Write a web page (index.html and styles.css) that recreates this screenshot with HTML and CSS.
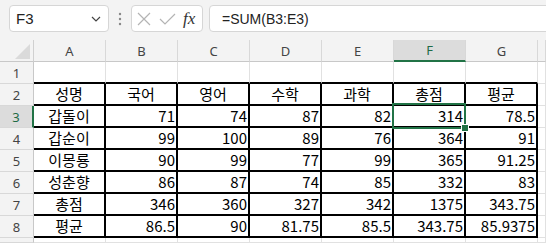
FILE: index.html
```html
<!DOCTYPE html>
<html lang="ko">
  <head>
    <meta charset="UTF-8" />
    <meta name="viewport" content="width=device-width, initial-scale=1.0" />
    <title>성적표</title>
    <link rel="stylesheet" href="styles.css">
  </head>
  <body>
    <!-- 수식 입력줄 -->
    <div class="formula-bar">
      <div class="name-box">
        <span>F3</span>
        <svg class="chevron" width="10" height="6" viewBox="0 0 10 6"><path d="M1 1 L5 5 L9 1" fill="none" stroke="#444" stroke-width="1.2"/></svg>
      </div>
      <div class="grip">
        <svg width="4" height="14" viewBox="0 0 4 14"><circle cx="2" cy="2" r="1.2" fill="#888"/><circle cx="2" cy="7" r="1.2" fill="#888"/><circle cx="2" cy="12" r="1.2" fill="#888"/></svg>
      </div>
      <div class="fx-box">
        <svg width="14" height="14" viewBox="0 0 14 14"><path d="M1 1 L13 13 M13 1 L1 13" stroke="#b4b4b4" stroke-width="1.2" fill="none"/></svg>
        <svg width="17" height="12" viewBox="0 0 17 12"><path d="M1 6 L6 11 L16 1" stroke="#b4b4b4" stroke-width="1.2" fill="none"/></svg>
        <span class="fx">fx</span>
      </div>
      <div class="formula-input">=SUM(B3:E3)</div>
    </div>

    <!-- 시트 -->
    <div class="sheet">
      <div class="corner"><span class="tri"></span></div>
      <div class="col-head">A</div>
      <div class="col-head">B</div>
      <div class="col-head">C</div>
      <div class="col-head">D</div>
      <div class="col-head">E</div>
      <div class="col-head sel">F</div>
      <div class="col-head">G</div>
      <div class="col-head"></div>

      <div class="row-head">1</div>
      <div class="cell top"></div><div class="cell top"></div><div class="cell top"></div><div class="cell top"></div><div class="cell top"></div><div class="cell top"></div><div class="cell top"></div><div class="cell"></div>

      <div class="row-head">2</div>
      <div class="cell box k">성명</div><div class="cell box k">국어</div><div class="cell box k">영어</div><div class="cell box k">수학</div><div class="cell box k">과학</div><div class="cell box k">총점</div><div class="cell box k">평균</div><div class="cell"></div>

      <div class="row-head sel">3</div>
      <div class="cell box k">갑돌이</div><div class="cell box n">71</div><div class="cell box n">74</div><div class="cell box n">87</div><div class="cell box n">82</div><div class="cell box n active">314<span class="cursor"><span class="handle"></span></span></div><div class="cell box n">78.5</div><div class="cell"></div>

      <div class="row-head">4</div>
      <div class="cell box k">갑순이</div><div class="cell box n">99</div><div class="cell box n">100</div><div class="cell box n">89</div><div class="cell box n">76</div><div class="cell box n">364</div><div class="cell box n">91</div><div class="cell"></div>

      <div class="row-head">5</div>
      <div class="cell box k">이몽룡</div><div class="cell box n">90</div><div class="cell box n">99</div><div class="cell box n">77</div><div class="cell box n">99</div><div class="cell box n">365</div><div class="cell box n">91.25</div><div class="cell"></div>

      <div class="row-head">6</div>
      <div class="cell box k">성춘향</div><div class="cell box n">86</div><div class="cell box n">87</div><div class="cell box n">74</div><div class="cell box n">85</div><div class="cell box n">332</div><div class="cell box n">83</div><div class="cell"></div>

      <div class="row-head">7</div>
      <div class="cell box k">총점</div><div class="cell box n">346</div><div class="cell box n">360</div><div class="cell box n">327</div><div class="cell box n">342</div><div class="cell box n">1375</div><div class="cell box n">343.75</div><div class="cell"></div>

      <div class="row-head">8</div>
      <div class="cell box k">평균</div><div class="cell box n">86.5</div><div class="cell box n">90</div><div class="cell box n">81.75</div><div class="cell box n">85.5</div><div class="cell box n">343.75</div><div class="cell box n">85.9375</div><div class="cell"></div>

      <div class="row-head"></div>
      <div class="cell"></div><div class="cell"></div><div class="cell"></div><div class="cell"></div><div class="cell"></div><div class="cell"></div><div class="cell"></div><div class="cell"></div>
    </div>
  </body>
</html>
```

FILE: styles.css
```css
* {
  box-sizing: border-box;
}

body {
  margin: 0;
  width: 546px;
  height: 243px;
  overflow: hidden;
  background-color: #f3f3f3;
  font-family: "Liberation Sans", "Noto Sans CJK KR", sans-serif;
}

/* 수식 입력줄 */
.formula-bar {
  display: flex;
  align-items: center;
  width: 546px;
  height: 40px;
  padding: 0 0 3px 9px;
  overflow: hidden;
}

.name-box,
.fx-box,
.formula-input {
  height: 27px;
  background: white;
  border: 1px solid #d6d6d6;
  border-radius: 4px;
  display: flex;
  align-items: center;
}

.name-box {
  width: 100px;
  justify-content: space-between;
  padding: 0 7px 0 6px;
  font-size: 15px;
  color: #222;
}

.chevron {
  margin-top: 1px;
}

.grip {
  width: 22px;
  display: flex;
  justify-content: center;
}

.fx-box {
  width: 72px;
  gap: 8px;
  padding-left: 5px;
}

.fx {
  font-family: "Liberation Serif", serif;
  font-style: italic;
  font-size: 17px;
  color: #333;
  margin-left: -1px;
}

.formula-input {
  flex: 1;
  margin-left: 6px;
  margin-right: -10px;
  padding-left: 12px;
  font-size: 14px;
  color: #222;
}

/* 시트 */
.sheet {
  display: grid;
  grid-template-columns: 34px repeat(7, 72px) 1fr;
  grid-template-rows: repeat(9, 22px) 1fr;
  width: 546px;
  height: 203px;
  overflow: hidden;
  background: white;
}

.corner,
.col-head,
.row-head {
  background-color: #f3f3f3;
  color: #444;
  font-family: "Noto Sans", sans-serif;
  font-size: 13px;
  display: flex;
  align-items: center;
  justify-content: center;
}

.corner {
  position: relative;
  border-right: 1px solid #d0d0d0;
  border-bottom: 1px solid #c8c8c8;
}

.tri {
  position: absolute;
  right: 3px;
  bottom: 2px;
  width: 0;
  height: 0;
  border-left: 15px solid transparent;
  border-bottom: 15px solid #dadada;
}

.col-head {
  border-right: 1px solid #d8d8d8;
  border-bottom: 1px solid #c8c8c8;
}

.row-head {
  border-right: 1px solid #c8c8c8;
  border-bottom: 1px solid #d8d8d8;
}

.col-head.sel {
  background-color: #dcdcdc;
  color: #1e6b45;
  border-bottom: 2px solid #217346;
}

.row-head.sel {
  background-color: #dcdcdc;
  color: #1e6b45;
  border-right: 2px solid #217346;
}

.cell {
  border-right: 1px solid #e1e1e1;
  border-bottom: 1px solid #e1e1e1;
  font-family: "Noto Sans CJK KR", sans-serif;
  font-size: 15px;
  line-height: 18px;
  color: #000;
  display: flex;
  align-items: flex-end;
  padding-bottom: 1px;
  white-space: nowrap;
}

.cell.top {
  border-bottom: 2px solid #000;
}

.cell.box {
  border-right: 2px solid #000;
  border-bottom: 2px solid #000;
}

.k {
  justify-content: center;
}

.n {
  justify-content: flex-end;
  padding-right: 1px;
}

/* 선택된 셀 */
.active {
  position: relative;
}

.cursor {
  position: absolute;
  top: -3px;
  left: -2px;
  width: 74px;
  height: 26px;
  border: 2px solid #217346;
}

.handle {
  position: absolute;
  right: -4px;
  bottom: -4px;
  width: 6px;
  height: 6px;
  background-color: #217346;
  outline: 1px solid white;
}
```
